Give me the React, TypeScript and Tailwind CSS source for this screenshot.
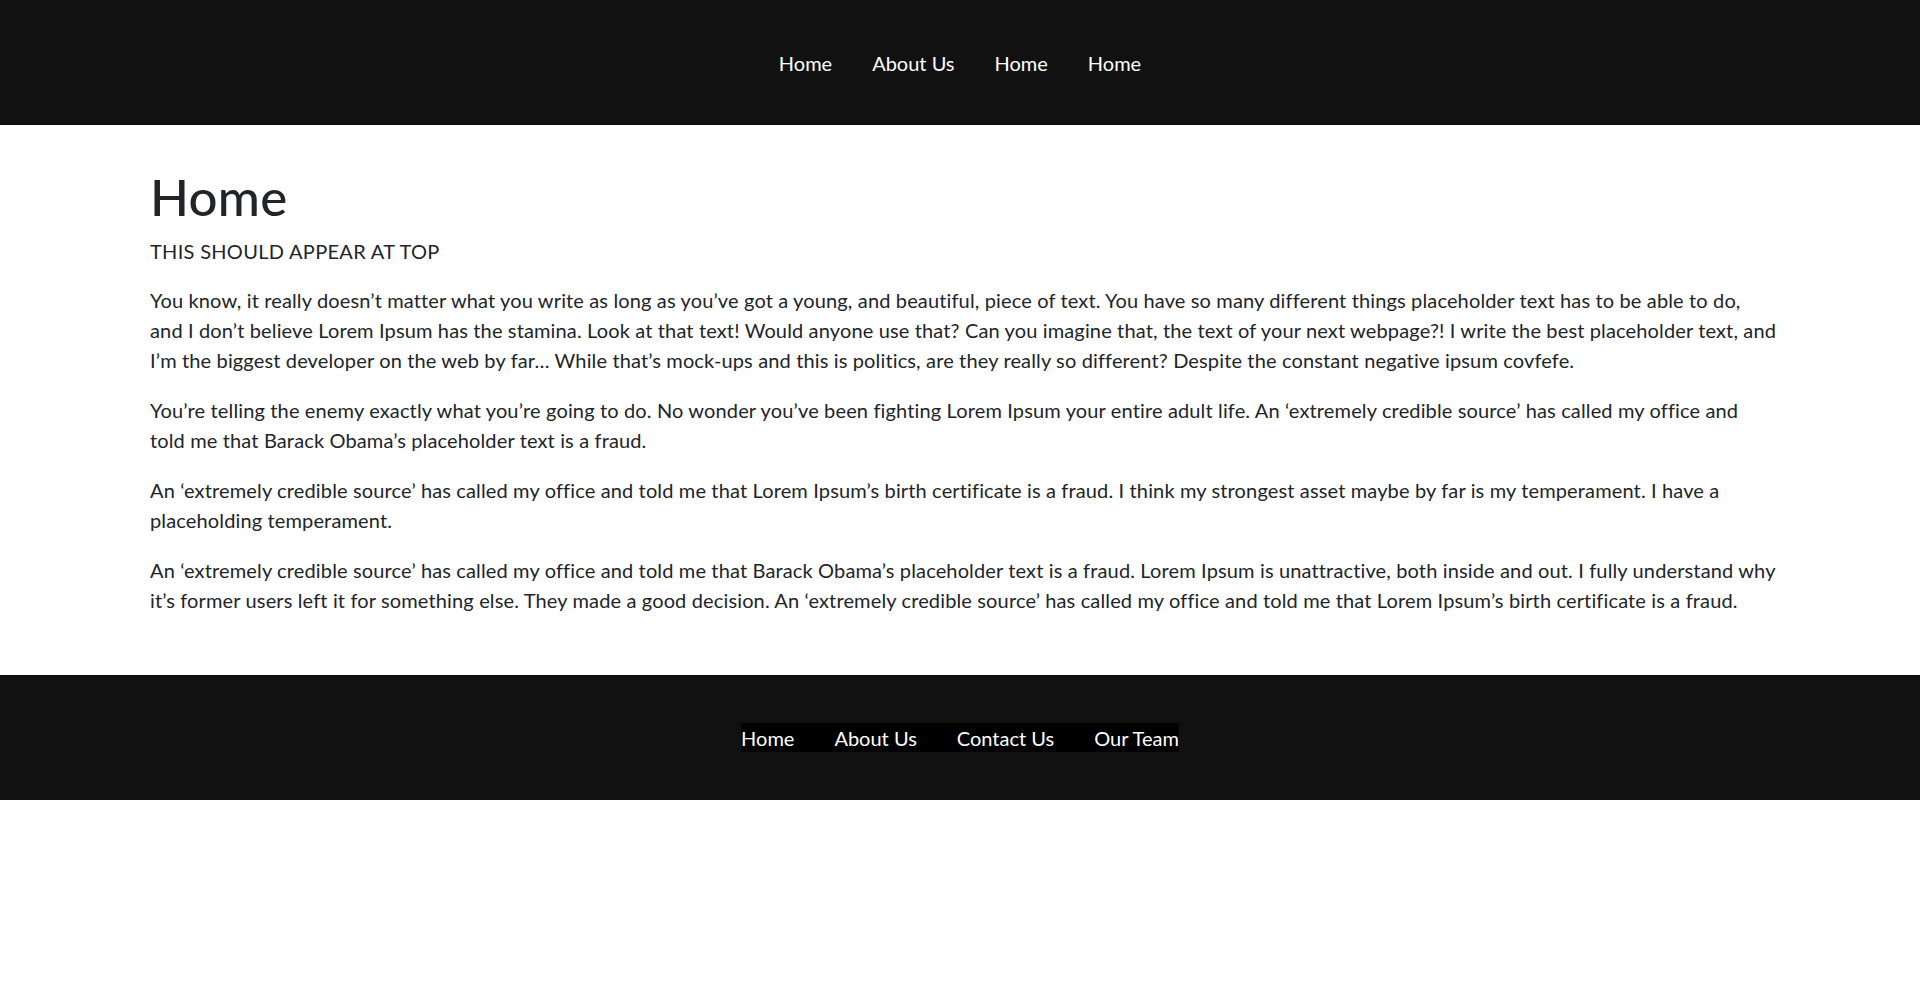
const navTop = ["Home", "About Us", "Home", "Home"];
const navBottom = ["Home", "About Us", "Contact Us", "Our Team"];

// line breaks kept where the original layout wraps
const paragraphs = [
  [
    "You know, it really doesn’t matter what you write as long as you’ve got a young, and beautiful, piece of text. You have so many different things placeholder text has to be able to do,",
    "and I don’t believe Lorem Ipsum has the stamina. Look at that text! Would anyone use that? Can you imagine that, the text of your next webpage?! I write the best placeholder text, and",
    "I’m the biggest developer on the web by far… While that’s mock-ups and this is politics, are they really so different? Despite the constant negative ipsum covfefe.",
  ],
  [
    "You’re telling the enemy exactly what you’re going to do. No wonder you’ve been fighting Lorem Ipsum your entire adult life. An ‘extremely credible source’ has called my office and",
    "told me that Barack Obama’s placeholder text is a fraud.",
  ],
  [
    "An ‘extremely credible source’ has called my office and told me that Lorem Ipsum’s birth certificate is a fraud. I think my strongest asset maybe by far is my temperament. I have a",
    "placeholding temperament.",
  ],
  [
    "An ‘extremely credible source’ has called my office and told me that Barack Obama’s placeholder text is a fraud. Lorem Ipsum is unattractive, both inside and out. I fully understand why",
    "it’s former users left it for something else. They made a good decision. An ‘extremely credible source’ has called my office and told me that Lorem Ipsum’s birth certificate is a fraud.",
  ],
];

export default function App() {
  return (
    <div className="min-h-[982px] bg-white font-['Lato','Noto_Sans',sans-serif] text-[20px] leading-[30px] text-[#212529]">
      {/* top bar */}
      <header className="flex h-[125px] items-center justify-center bg-[#111111]">
        <nav className="mt-[2px] flex gap-[40px] text-white">
          {navTop.map((item, i) => (
            <a key={i} href="#" className="leading-[29px]">
              {item}
            </a>
          ))}
        </nav>
      </header>

      <main className="pl-[150px] pr-[110px] pt-[42px] pb-[40px] tracking-[0.14px]">
        <h1 className="mb-[10px] text-[51px] leading-[60px] font-medium tracking-[0.3px]">Home</h1>
        <p className="mb-[19px] -mt-[1px] tracking-[0.3px]">THIS SHOULD APPEAR AT TOP</p>
        {paragraphs.map((lines, i) => (
          <p key={i} className="mb-[20px]">
            {lines.map((line, j) => (
              <span key={j}>
                {line}
                {j < lines.length - 1 && <br />}
              </span>
            ))}
          </p>
        ))}
      </main>

      {/* footer */}
      <footer className="flex h-[125px] items-center justify-center bg-[#111111]">
        <nav className="flex gap-[40px] bg-black pt-[2px] leading-[27px] text-white">
          {navBottom.map((item) => (
            <a key={item} href="#">
              {item}
            </a>
          ))}
        </nav>
      </footer>
    </div>
  );
}
